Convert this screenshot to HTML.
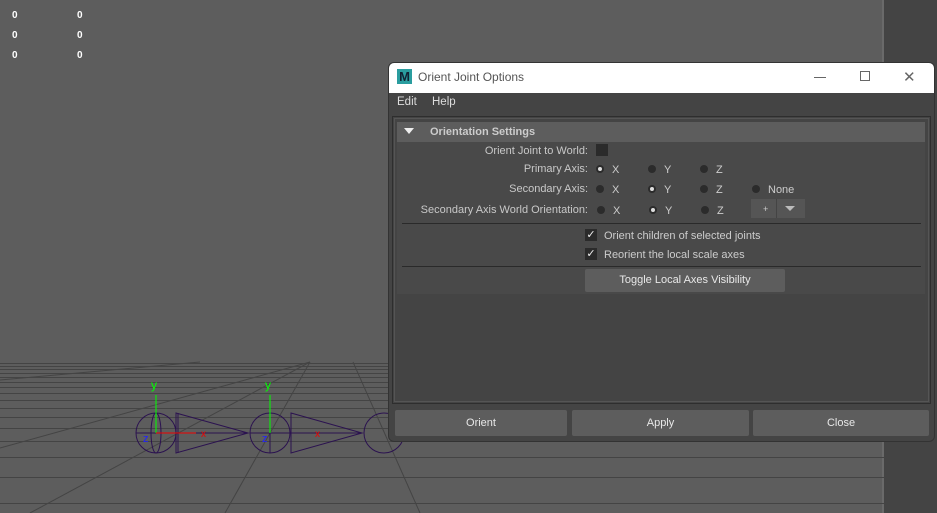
<!DOCTYPE html>
<html><head><style>
*{margin:0;padding:0;box-sizing:border-box}
body{width:937px;height:513px;background:#5d5d5d;position:relative;overflow:hidden;font-family:"Liberation Sans",sans-serif;font-size:11px;color:#ccc}
.a{position:absolute}
.num{color:#fff;font-size:10px;font-weight:bold}
.lbl{text-align:right;color:#c8c8c8}
.rad{width:8px;height:8px;border-radius:50%;background:#2b2b2b}
.rad.on::after{content:"";position:absolute;left:2px;top:2px;width:4px;height:4px;border-radius:50%;background:#ddd}
.btn{background:#5d5d5d;color:#e8e8e8;text-align:center;border-radius:2px}
.cb{width:12px;height:12px;background:#2b2b2b;color:#eee;font-size:11px;line-height:12px;text-align:center}
</style></head><body>
<div class="a num" style="left:12px;top:10px">0</div><div class="a num" style="left:77px;top:10px">0</div>
<div class="a num" style="left:12px;top:30px">0</div><div class="a num" style="left:77px;top:30px">0</div>
<div class="a num" style="left:12px;top:50px">0</div><div class="a num" style="left:77px;top:50px">0</div>
<div class="a" style="left:882px;top:0;width:2px;height:513px;background:#6a6a6a"></div>
<div class="a" style="left:884px;top:0;width:53px;height:513px;background:#444"></div>
<svg class="a" style="left:0;top:0" width="937" height="513">
<g stroke="#444" stroke-width="1">
<line x1="0" y1="363.5" x2="884" y2="363.5"/><line x1="0" y1="366.5" x2="884" y2="366.5"/>
<line x1="0" y1="369.5" x2="884" y2="369.5"/><line x1="0" y1="373.5" x2="884" y2="373.5"/>
<line x1="0" y1="377.5" x2="884" y2="377.5"/><line x1="0" y1="382.5" x2="884" y2="382.5"/>
<line x1="0" y1="387.5" x2="884" y2="387.5"/><line x1="0" y1="393.5" x2="884" y2="393.5"/>
<line x1="0" y1="400.5" x2="884" y2="400.5"/><line x1="0" y1="408.5" x2="884" y2="408.5"/>
<line x1="0" y1="417.5" x2="884" y2="417.5"/><line x1="0" y1="428.5" x2="884" y2="428.5"/>
<line x1="0" y1="441.5" x2="884" y2="441.5"/><line x1="0" y1="457.5" x2="884" y2="457.5"/>
<line x1="0" y1="477.5" x2="884" y2="477.5"/><line x1="0" y1="503.5" x2="884" y2="503.5"/>
<line x1="0" y1="448" x2="310" y2="362"/><line x1="30" y1="513" x2="310" y2="362"/>
<line x1="225" y1="513" x2="310" y2="362"/><line x1="420" y1="513" x2="353" y2="362"/>
<line x1="0" y1="380" x2="200" y2="362"/>
</g>
<g stroke="#2b1250" stroke-width="1" fill="none">
<circle cx="156" cy="433" r="20"/><ellipse cx="156" cy="433" rx="5" ry="20"/>
<line x1="136" y1="433" x2="248" y2="433"/>
<polygon points="176,413 248,433 176,453"/><line x1="178" y1="413" x2="178" y2="453"/>
<circle cx="270" cy="433" r="20"/><line x1="270" y1="413" x2="270" y2="453"/>
<line x1="250" y1="433" x2="362" y2="433"/>
<polygon points="291,413 362,433 291,453"/>
<circle cx="384" cy="433" r="20"/>
</g>
<line x1="156" y1="395" x2="156" y2="433" stroke="#0f0"/>
<line x1="270" y1="395" x2="270" y2="433" stroke="#0f0"/>
<line x1="156" y1="433" x2="196" y2="433" stroke="#e00"/>
<text x="151" y="389" fill="#0f0" font-size="12" font-family="Liberation Sans">y</text>
<text x="265" y="389" fill="#0f0" font-size="12" font-family="Liberation Sans">y</text>
<text x="143" y="442" fill="#22f" font-size="11" font-family="Liberation Sans">z</text>
<text x="262" y="442" fill="#22f" font-size="11" font-family="Liberation Sans">z</text>
<text x="201" y="437" fill="#e00" font-size="10" font-family="Liberation Sans">x</text>
<text x="315" y="437" fill="#e00" font-size="10" font-family="Liberation Sans">x</text>
</svg>
<div class="a" style="left:388px;top:62px;width:547px;height:380px;background:#444;border-radius:6px;overflow:hidden;border:1px solid #333">
<div class="a" style="left:0;top:0;width:547px;height:30px;background:#fff"></div>
<div class="a" style="left:8px;top:6px;width:15px;height:15px;background:#2a9d9f;color:#123;font-weight:bold;font-size:13px;line-height:15px;text-align:center">M</div>
<div class="a" style="left:29px;top:7px;font-size:12px;color:#555">Orient Joint Options</div>
<div class="a" style="left:425px;top:14px;width:12px;height:1px;background:#666"></div>
<div class="a" style="left:471px;top:8px;width:10px;height:10px;border:1px solid #666"></div>
<div class="a" style="left:514px;top:5px;font-size:15px;color:#666">✕</div>
<div class="a" style="left:8px;top:33px;color:#ddd;font-size:11.5px">Edit</div>
<div class="a" style="left:43px;top:33px;color:#ddd;font-size:11.5px">Help</div>
<div class="a" style="left:3px;top:53px;width:539px;height:288px;border:1px solid #2e2e2e;outline:1px solid #555;outline-offset:-3px"></div>
<div class="a" style="left:8px;top:59px;width:528px;height:172px;background:#494949"></div>
<div class="a" style="left:8px;top:59px;width:528px;height:20px;background:#5d5d5d"></div>
<div class="a" style="left:15px;top:65px;width:0;height:0;border-left:5px solid transparent;border-right:5px solid transparent;border-top:6px solid #eee"></div>
<div class="a" style="left:41px;top:63px;font-weight:bold;color:#ccc">Orientation Settings</div>
<div class="a lbl" style="left:0;top:82px;width:199px">Orient Joint to World:</div>
<div class="a" style="left:207px;top:81px;width:12px;height:12px;background:#2b2b2b"></div>
<div class="a lbl" style="left:0;top:100px;width:199px">Primary Axis:</div>
<div class="a lbl" style="left:0;top:120px;width:199px">Secondary Axis:</div>
<div class="a lbl" style="left:0;top:141px;width:199px">Secondary Axis World Orientation:</div>
<div class="a rad on" style="left:207px;top:102px"></div><div class="a" style="left:223px;top:101px">X</div>
<div class="a rad" style="left:259px;top:102px"></div><div class="a" style="left:275px;top:101px">Y</div>
<div class="a rad" style="left:311px;top:102px"></div><div class="a" style="left:327px;top:101px">Z</div>
<div class="a rad" style="left:207px;top:122px"></div><div class="a" style="left:223px;top:121px">X</div>
<div class="a rad on" style="left:259px;top:122px"></div><div class="a" style="left:275px;top:121px">Y</div>
<div class="a rad" style="left:311px;top:122px"></div><div class="a" style="left:327px;top:121px">Z</div>
<div class="a rad" style="left:363px;top:122px"></div><div class="a" style="left:379px;top:121px">None</div>
<div class="a rad" style="left:208px;top:143px"></div><div class="a" style="left:224px;top:142px">X</div>
<div class="a rad on" style="left:260px;top:143px"></div><div class="a" style="left:276px;top:142px">Y</div>
<div class="a rad" style="left:312px;top:143px"></div><div class="a" style="left:328px;top:142px">Z</div>
<div class="a" style="left:362px;top:136px;width:54px;height:19px;background:#555"></div>
<div class="a" style="left:387px;top:136px;width:1px;height:19px;background:#444"></div>
<div class="a" style="left:374px;top:141px;font-size:9px">+</div>
<div class="a" style="left:396px;top:143px;border-left:5px solid transparent;border-right:5px solid transparent;border-top:5px solid #bbb"></div>
<div class="a" style="left:13px;top:160px;width:519px;height:1px;background:#2a2a2a"></div>
<div class="a cb" style="left:196px;top:166px">✓</div><div class="a" style="left:215px;top:167px;color:#ccc">Orient children of selected joints</div>
<div class="a cb" style="left:196px;top:185px">✓</div><div class="a" style="left:215px;top:186px;color:#ccc">Reorient the local scale axes</div>
<div class="a" style="left:13px;top:203px;width:519px;height:1px;background:#2a2a2a"></div>
<div class="a btn" style="left:196px;top:206px;width:200px;height:23px;line-height:23px">Toggle Local Axes Visibility</div>
<div class="a btn" style="left:6px;top:347px;width:172px;height:26px;line-height:26px">Orient</div>
<div class="a btn" style="left:183px;top:347px;width:177px;height:26px;line-height:26px">Apply</div>
<div class="a btn" style="left:364px;top:347px;width:176px;height:26px;line-height:26px">Close</div>
</div>
</body></html>
